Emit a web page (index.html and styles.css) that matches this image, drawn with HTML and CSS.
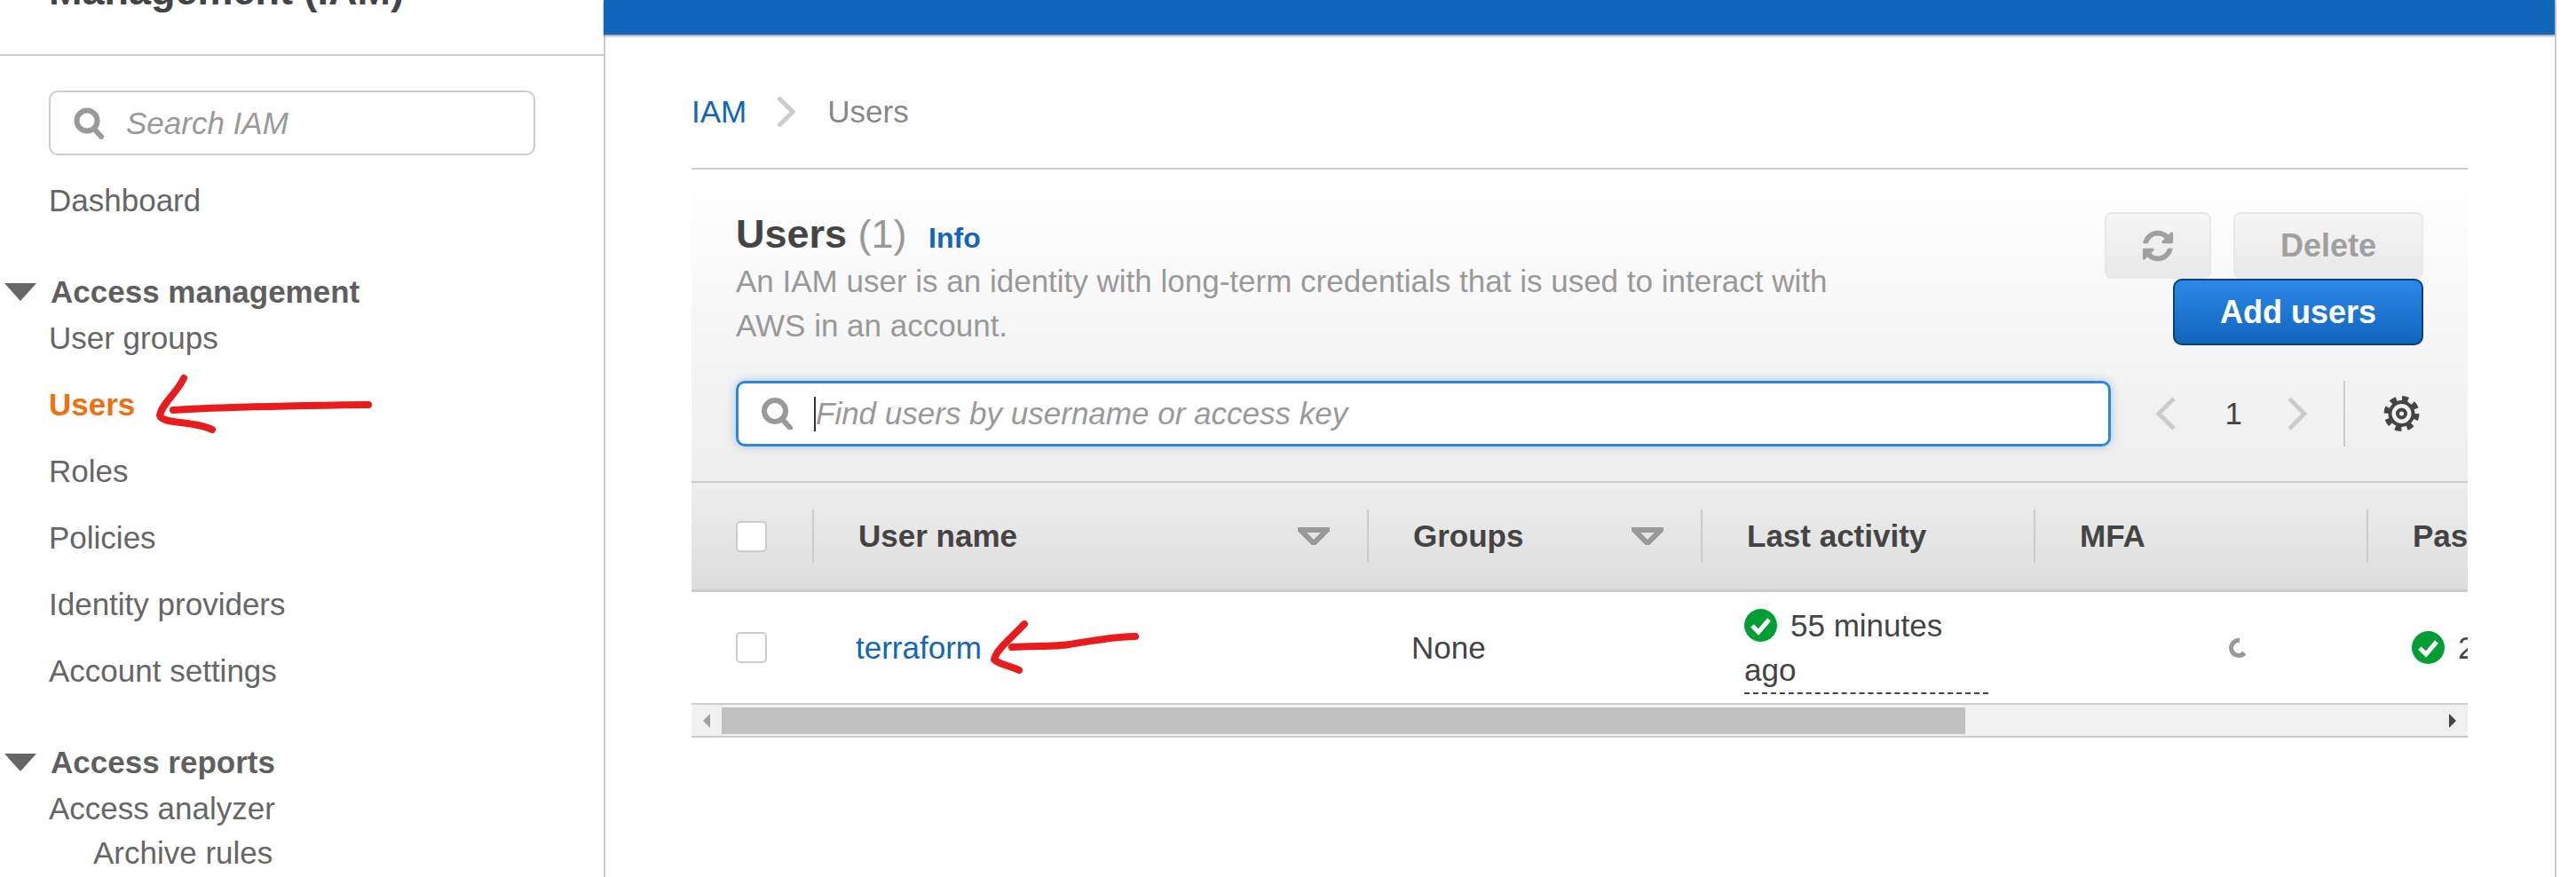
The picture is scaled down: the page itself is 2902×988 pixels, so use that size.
FILE: index.html
```html
<!DOCTYPE html>
<html lang="en">
<head>
    <meta charset="UTF-8">
    <title>Users | IAM</title>
    <link rel="stylesheet" href="styles.css">
</head>
<body>
    <aside class="sidebar">
        <h1 class="side-title">Management (IAM)</h1>
        <div class="side-search">
            <svg class="search-icon" viewBox="0 0 36 36"><circle cx="16" cy="15" r="11.5"/><line x1="24" y1="24" x2="32" y2="33"/></svg>
            <span>Search IAM</span>
        </div>
        <a class="nav-item dashboard">Dashboard</a>

        <div class="nav-group">
            <div class="nav-head"><span class="tri"></span>Access management</div>
            <a class="nav-item">User groups</a>
            <a class="nav-item active">Users</a>
            <a class="nav-item">Roles</a>
            <a class="nav-item">Policies</a>
            <a class="nav-item">Identity providers</a>
            <a class="nav-item">Account settings</a>
        </div>

        <div class="nav-group">
            <div class="nav-head"><span class="tri"></span>Access reports</div>
            <a class="nav-item tight">Access analyzer</a>
            <a class="nav-item sub">Archive rules</a>
        </div>
    </aside>

    <main class="main">
        <div class="topbar"></div>
        <div class="content">
            <nav class="crumbs">
                <a class="crumb-link">IAM</a>
                <svg class="crumb-sep" viewBox="0 0 21 34"><polyline points="2,1 18,17 2,33"/></svg>
                <span>Users</span>
            </nav>

            <section class="panel-head">
                <div class="head-top">
                    <div class="head-text">
                        <h2 class="panel-title">Users <span class="count">(1)</span> <a class="info">Info</a></h2>
                        <p class="panel-desc">An IAM user is an identity with long-term credentials that is used to interact with AWS in an account.</p>
                    </div>
                    <div class="actions">
                        <button class="btn btn-icon">
                            <svg viewBox="0 0 1792 1792"><path d="M1639 1056q0 5-1 7-64 268-268 434.500t-478 166.500q-146 0-282.500-55t-243.500-157l-129 129q-19 19-45 19t-45-19-19-45v-448q0-26 19-45t45-19h448q26 0 45 19t19 45-19 45l-137 137q71 66 161 102t187 36q134 0 250-65t186-179q11-17 53-117 8-23 30-23h192q13 0 22.500 9.500t9.500 22.500zm25-800v448q0 26-19 45t-45 19h-448q-26 0-45-19t-19-45 19-45l138-138q-148-137-349-137-134 0-250 65t-186 179q-11 17-53 117-8 23-30 23h-199q-13 0-22.500-9.500t-9.500-22.500v-7q65-268 270-434.500t480-166.500q146 0 284 55.500t245 156.500l130-129q19-19 45-19t45 19 19 45z"/></svg>
                        </button>
                        <button class="btn btn-delete">Delete</button>
                        <button class="btn btn-primary">Add users</button>
                    </div>
                </div>

                <div class="head-filter">
                    <div class="filter-box">
                        <svg class="search-icon" viewBox="0 0 38 36"><circle cx="17" cy="15" r="12"/><line x1="25" y1="24" x2="34" y2="34"/></svg>
                        <span class="caret"></span>
                        <span class="filter-text">Find users by username or access key</span>
                    </div>
                    <div class="pager">
                        <svg class="pager-arrow" viewBox="0 0 23 38"><polyline points="21,2 4,19 21,36"/></svg>
                        <span class="page-num">1</span>
                        <svg class="pager-arrow" viewBox="0 0 23 38"><polyline points="2,2 19,19 2,36"/></svg>
                        <span class="pager-line"></span>
                        <svg class="gear" viewBox="0 0 41 40"><circle class="teeth" cx="20.500" cy="20" r="17"/><circle cx="20.500" cy="20" r="13"/><circle cx="20.500" cy="20" r="4.500"/></svg>
                    </div>
                </div>
            </section>

            <div class="table-wrap">
                <div class="t-row t-head">
                    <div class="t-cell"><span class="check"></span></div>
                    <div class="t-cell"><span class="th-in">User name<svg class="sort" viewBox="0 0 36 20"><polygon points="3,3 33,3 18,18"/></svg></span></div>
                    <div class="t-cell"><span class="th-in">Groups<svg class="sort" viewBox="0 0 36 20"><polygon points="3,3 33,3 18,18"/></svg></span></div>
                    <div class="t-cell"><span class="th-in">Last activity</span></div>
                    <div class="t-cell"><span class="th-in">MFA</span></div>
                    <div class="t-cell"><span class="th-in">Password age</span></div>
                </div>
                <div class="t-row t-body">
                    <div class="t-cell"><span class="check"></span></div>
                    <div class="t-cell"><a class="user-link">terraform</a></div>
                    <div class="t-cell groups">None</div>
                    <div class="t-cell activity">
                        <span class="activity-in"><svg class="ok" viewBox="0 0 37 37"><circle cx="18.500" cy="18.500" r="18.500"/><polyline points="9,19 16,26 28,12"/></svg>55 minutes ago</span>
                    </div>
                    <div class="t-cell mfa">
                        <svg class="spinner" viewBox="0 0 20 24"><path d="M12 3.500 A8.500 8.500 0 1 0 17.500 17.500"/></svg>
                    </div>
                    <div class="t-cell pass"><svg class="ok" viewBox="0 0 37 37"><circle cx="18.500" cy="18.500" r="18.500"/><polyline points="9,19 16,26 28,12"/></svg>2 hours</div>
                </div>
                <div class="scrollbar">
                    <span class="scroll-btn"><span class="arrow-left"></span></span>
                    <span class="scroll-thumb"></span>
                    <span class="scroll-rest"></span>
                    <span class="scroll-btn"><span class="arrow-right"></span></span>
                </div>
            </div>
        </div>
    </main>

    <!-- red marker arrows drawn over the screenshot -->
    <svg class="marks" viewBox="0 0 2902 988">
        <path d="M195 462 C260 458 340 457 415 456"/>
        <path d="M207 426 C200 442 182 455 180 468 C182 478 220 474 239 484"/>
        <path d="M1140 729 C1160 727 1190 729 1204 726 C1230 722 1255 717 1279 717"/>
        <path d="M1154 703 C1140 718 1122 732 1120 743 C1124 748 1138 750 1148 755"/>
    </svg>
</body>
</html>
```

FILE: styles.css
```css
* {
    box-sizing: border-box;
}
html, body {
    height: 100%;
}
body {
    margin: 0;
    display: flex;
    position: relative;
    overflow: hidden;
    background: white;
    font-family: "Liberation Sans", Arial, sans-serif;
    font-size: 35px;
    color: #444;
}
a {
    text-decoration: none;
}
h1, h2, p {
    margin: 0;
}

/* sidebar */
.sidebar {
    width: 682px;
    flex-shrink: 0;
    border-right: 2px solid #ccc;
    height: 100%;
    overflow: hidden;
}
.side-title {
    margin-top: -35px;
    padding: 0 0 46px 55px;
    border-bottom: 2px solid #ccc;
    font-size: 45px;
    line-height: 50px;
    color: #444;
}
.side-search {
    display: flex;
    align-items: center;
    gap: 24px;
    width: 548px;
    height: 73px;
    margin: 39px 0 0 55px;
    padding-left: 25px;
    border: 2px solid #ccc;
    border-radius: 10px;
    color: #999;
    font-style: italic;
}
.search-icon {
    width: 36px;
    height: 36px;
    fill: none;
    stroke: #999;
    stroke-width: 6;
    stroke-linecap: round;
    flex-shrink: 0;
}
.nav-item {
    display: block;
    padding-left: 55px;
    line-height: 50px;
    margin-bottom: 25px;
    color: #666;
}
.nav-item.dashboard {
    margin-top: 26px;
    margin-bottom: 0;
}
.nav-item.active {
    color: #ec7211;
    font-weight: bold;
}
.nav-item.tight {
    margin-bottom: 0;
}
.nav-item.sub {
    padding-left: 105px;
}
.nav-group {
    margin-top: 53px;
}
.nav-head {
    display: flex;
    align-items: center;
    gap: 16px;
    padding-left: 5px;
    line-height: 50px;
    margin-bottom: 2px;
    font-weight: bold;
    color: #5f5f5f;
}
.tri {
    width: 0;
    height: 0;
    border-left: 18px solid transparent;
    border-right: 18px solid transparent;
    border-top: 20px solid #666;
}

/* main area */
.main {
    width: 2200px;
    height: 100%;
    flex-shrink: 0;
    margin-left: -2px;
    border-right: 2px solid #ccc;
    position: relative;
}
.topbar {
    height: 39px;
    background: #1166bb;
    box-shadow: 0 2px 2px rgba(0, 0, 0, 0.35);
}
.content {
    padding: 0 98px 0 99px;
}
.crumbs {
    display: flex;
    align-items: center;
    height: 152px;
    padding-top: 24px;
    border-bottom: 2px solid #ccc;
    color: #888;
}
.crumb-link {
    color: #1166bb;
}
.crumb-sep {
    width: 21px;
    height: 34px;
    margin: 0 36px 0 34px;
    fill: none;
    stroke: #ccc;
    stroke-width: 5;
}

/* panel header */
.panel-head {
    padding: 48px 50px 39px;
    background: linear-gradient(#fff, #eee);
}
.head-top {
    display: flex;
    justify-content: space-between;
}
.head-text {
    padding-top: 1px;
}
.panel-title {
    font-size: 45px;
    line-height: 48px;
    color: #444;
}
.count {
    font-weight: normal;
    color: #999;
}
.info {
    margin-left: 12px;
    font-size: 32px;
    color: #1166bb;
}
.panel-desc {
    width: 1260px;
    line-height: 50px;
    color: #999;
}
.actions {
    width: 359px;
    display: flex;
    flex-wrap: wrap;
    justify-content: flex-end;
    column-gap: 25px;
    align-content: flex-start;
}
.btn {
    height: 75px;
    font-family: inherit;
    font-size: 36px;
    font-weight: bold;
    border-radius: 8px;
    padding: 0;
}
.btn-icon, .btn-delete {
    border: 2px solid #e8e8e8;
    background: linear-gradient(#f6f6f6, #e8e8e8);
    color: #a0a0a0;
}
.btn-icon {
    width: 120px;
    display: flex;
    align-items: center;
    justify-content: center;
}
.btn-icon svg {
    width: 40px;
    height: 40px;
    fill: #a0a0a0;
}
.btn-delete {
    width: 214px;
}
.btn-primary {
    width: 282px;
    border: 2px solid #0a3f78;
    border-radius: 10px;
    background: linear-gradient(#2c88e8, #1166bb);
    color: white;
}
.head-filter {
    display: flex;
    align-items: center;
    margin-top: 37px;
}
.filter-box {
    flex: 1;
    height: 74px;
    display: flex;
    align-items: center;
    padding-left: 24px;
    background: white;
    border: 3px solid #2f86dc;
    border-radius: 10px;
    box-shadow: 0 0 12px rgba(47, 134, 220, 0.4);
}
.filter-box .search-icon {
    width: 38px;
    height: 36px;
}
.caret {
    width: 2px;
    height: 39px;
    margin-left: 23px;
    background: #333;
}
.filter-text {
    color: #999;
    font-style: italic;
}
.pager {
    display: flex;
    align-items: center;
    margin-left: 50px;
    margin-right: 4px;
}
.pager-arrow {
    width: 23px;
    height: 38px;
    fill: none;
    stroke: #ccc;
    stroke-width: 5;
}
.page-num {
    margin: 0 51px 0 56px;
    color: #444;
}
.pager-line {
    width: 2px;
    height: 74px;
    margin: 0 43px 0 40px;
    background: #ccc;
}
.gear {
    width: 41px;
    height: 40px;
    fill: none;
    stroke: #444;
    stroke-width: 4;
}
.gear .teeth {
    stroke-width: 6;
    stroke-dasharray: 7 6.350;
}

/* table */
.table-wrap {
    overflow: hidden;
}
.t-row {
    display: grid;
    grid-template-columns: 136px 625px 376px 375px 375px 400px;
}
.t-cell {
    display: flex;
    align-items: center;
    min-width: 0;
}
.t-cell:first-child {
    padding-left: 50px;
}
.t-head {
    height: 125px;
    border-top: 2px solid #ccc;
    border-bottom: 3px solid #ccc;
    background: linear-gradient(#eee, #ddd);
    font-weight: bold;
}
.th-in {
    flex: 1;
    height: 60px;
    display: flex;
    align-items: center;
    justify-content: space-between;
    padding: 0 42px 0 50px;
    border-left: 2px solid #ccc;
    white-space: nowrap;
}
.sort {
    width: 36px;
    height: 20px;
    fill: none;
    stroke: #999;
    stroke-width: 6;
}
.check {
    width: 35px;
    height: 35px;
    background: white;
    border: 2px solid #ccc;
    border-radius: 5px;
}
.t-body {
    height: 125px;
}
.user-link {
    padding-left: 49px;
    color: #1166bb;
}
.groups {
    padding-left: 50px;
}
.activity {
    padding-left: 49px;
}
.activity-in {
    width: 275px;
    padding-top: 2px;
    line-height: 50px;
    border-bottom: 2px dashed #444;
}
.ok {
    width: 37px;
    height: 37px;
    margin-right: 15px;
    vertical-align: -6px;
    flex-shrink: 0;
}
.ok circle {
    fill: #039d35;
}
.ok polyline {
    fill: none;
    stroke: white;
    stroke-width: 5;
}
.mfa {
    padding-left: 220px;
}
.spinner {
    width: 20px;
    height: 24px;
    margin-top: 1px;
    fill: none;
    stroke: #999;
    stroke-width: 5;
}
.pass {
    padding-left: 51px;
    white-space: nowrap;
}
.scrollbar {
    height: 39px;
    display: flex;
    align-items: center;
    border-top: 2px solid #ccc;
    border-bottom: 2px solid #ccc;
    background: #f0f0f0;
}
.scroll-btn {
    width: 34px;
    display: flex;
    justify-content: center;
}
.scroll-thumb {
    width: 1401px;
    height: 30px;
    background: #c0c0c0;
}
.scroll-rest {
    flex: 1;
}
.arrow-left {
    border-top: 8px solid transparent;
    border-bottom: 8px solid transparent;
    border-right: 8px solid #a0a0a0;
}
.arrow-right {
    border-top: 8px solid transparent;
    border-bottom: 8px solid transparent;
    border-left: 8px solid #444;
}

/* hand drawn arrows */
.marks {
    position: absolute;
    left: 0;
    top: 0;
    width: 2902px;
    height: 988px;
    fill: none;
    stroke: #e81c1c;
    stroke-width: 8;
    stroke-linecap: round;
    stroke-linejoin: round;
    pointer-events: none;
}
```
